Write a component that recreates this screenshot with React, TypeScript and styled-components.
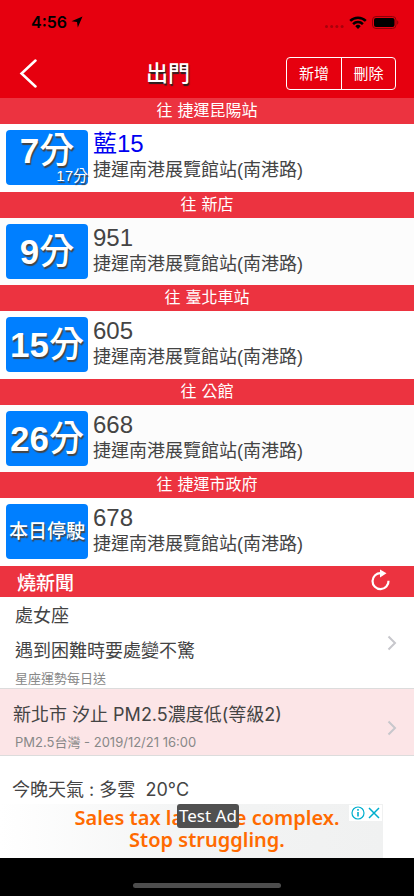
import React from 'react';
import styled, { createGlobalStyle } from 'styled-components';

const cjk = '"Noto Sans CJK TC", sans-serif';

const GlobalStyle = createGlobalStyle`
  *, *::before, *::after { box-sizing: border-box; }
  body {
    margin: 0;
    background: #fff;
    color: #444;
    font-family: "Liberation Sans", ${cjk};
  }
  h1, h2, p { margin: 0; font-weight: 400; }
  button { font: inherit; color: inherit; background: none; border: 0; padding: 0; cursor: pointer; }
  svg { display: block; }
`;

const Page = styled.div`
  min-height: 100vh;
  display: flex;
  flex-direction: column;
`;

const Header = styled.header`
  background: #e6000f;
`;

const StatusBar = styled.div`
  height: 48px;
  padding: 0 15px 4px 31px;
  display: flex;
  align-items: center;
  justify-content: space-between;
  color: #000;
  font: 600 16px/20px Inter, sans-serif;
`;

const StatusGroup = styled.div`
  display: flex;
  align-items: center;
  gap: 4px;
`;

const SignalGroup = styled(StatusGroup)`
  gap: 5px;
`;

const NavBar = styled.div`
  height: 50px;
  padding: 0 18px;
  display: grid;
  grid-template-columns: 1fr auto 1fr;
  align-items: center;
  color: #fff;
`;

const BackButton = styled.button`
  justify-self: start;
`;

const Title = styled.h1`
  font: 500 22px/32px ${cjk};
  text-shadow: 1px 2px 1px #222;
  padding-bottom: 4px;
`;

const Segmented = styled.div`
  justify-self: end;
  display: flex;
  border: 1px solid #fff;
  border-radius: 4px;
`;

const Segment = styled.button`
  width: 54px;
  height: 31px;
  font: 400 15px/20px ${cjk};
  & + & { border-left: 1px solid #fff; }
`;

const TitleSlot = styled.div`
  margin-right: 78px;
`;

const RouteList = styled.main`
  display: grid;
  grid-auto-rows: 1fr;
  min-height: 468px;
`;

const RouteGroup = styled.section`
  display: flex;
  flex-direction: column;
  &:nth-child(even) { background: #fcfcfc; }
`;

const Direction = styled.h2`
  background: #ec3340;
  color: #fff;
  font-size: 16px;
  line-height: 26px;
  font-family: "DejaVu Sans", ${cjk};
  text-align: center;
`;

const RouteRow = styled.div`
  flex: 1;
  padding: 6px 6px 0;
  display: flex;
  gap: 5px;
`;

const TimeBadge = styled.div<{ $small?: boolean }>`
  position: relative;
  flex: none;
  width: 82px;
  height: 55px;
  border-radius: 4px;
  background: #007fff;
  color: #fff;
  display: flex;
  justify-content: center;
  font: ${p => (p.$small ? '500 19px' : '700 35px')}/55px "Liberation Sans", ${cjk};
  text-shadow: 1px 2px 1px #444;
  white-space: nowrap;
`;

const Minutes = styled.span<{ $raised?: boolean }>`
  line-height: ${p => (p.$raised ? 42 : 55)}px;
`;

const Unit = styled.span`
  font-weight: 500;
`;

const NextTime = styled.span`
  position: absolute;
  right: 0;
  bottom: 0;
  font-size: 15px;
  line-height: 18px;
  font-weight: 400;
`;

const RouteText = styled.div`
  min-width: 0;
`;

const RouteName = styled.p<{ $blue?: boolean }>`
  font-size: 24px;
  line-height: 28px;
  color: ${p => (p.$blue ? '#0000f0' : '#444')};
`;

const StopName = styled.p`
  font-size: 18px;
  line-height: 24px;
`;

const NewsHeader = styled.div`
  height: 31px;
  padding: 0 23px 0 17px;
  display: flex;
  align-items: center;
  justify-content: space-between;
  background: #ec3340;
  color: #fff;
`;

const NewsTitle = styled.h2`
  font: 500 19px/31px ${cjk};
`;

const RefreshButton = styled.button`
  align-self: flex-start;
  padding-top: 3px;
`;

const NewsItem = styled.a<{ $tinted?: boolean }>`
  display: flex;
  align-items: center;
  justify-content: space-between;
  padding: ${p => (p.$tinted ? '11px 17px 0 13px' : '1px 17px 0 15px')};
  background: ${p => (p.$tinted ? '#fce5e7' : '#fff')};
  border-bottom: 1px solid #dcdcdc;
  color: inherit;
  text-decoration: none;
  font-family: Inter, ${cjk};
`;

const Headline = styled.p<{ $tall?: boolean }>`
  font-size: 18px;
  line-height: ${p => (p.$tall ? 35 : 30)}px;
`;

const Source = styled.p<{ $indent?: boolean }>`
  font-size: 13px;
  line-height: ${p => (p.$indent ? 25 : 20)}px;
  padding-left: ${p => (p.$indent ? 2 : 0)}px;
  color: #888;
`;

const Weather = styled.p`
  padding: 20px 12px 0;
  font: 400 18px/28px Inter, ${cjk};
  white-space: pre;
`;

const Ad = styled.aside`
  position: relative;
  margin-right: 31px;
  height: 54px;
  background: linear-gradient(90deg, #fff, #f3f4f4 50%, #f0f1f1);
`;

const AdLink = styled.a`
  display: block;
  padding: 3px 0 0 31px;
  color: #ff6a00;
  text-decoration: none;
  text-align: center;
  font: 600 20px/22px "Noto Sans", sans-serif;
`;

const AdLabel = styled.span`
  position: absolute;
  top: 0;
  left: 177px;
  padding: 0 2px;
  border-radius: 3px;
  background: #505050;
  color: #fff;
  font: 400 17px/24px "Noto Sans", sans-serif;
`;

const AdControls = styled.div`
  position: absolute;
  top: 1px;
  right: 1px;
  display: flex;
  gap: 3px;
  padding: 1px 2px;
  background: #fff;
`;

const HomeArea = styled.footer`
  flex: 1;
  min-height: 38px;
  background: #000;
  display: flex;
  justify-content: center;
  align-items: flex-end;
  padding-bottom: 8px;
`;

const HomeIndicator = styled.div`
  width: 148px;
  height: 5px;
  border-radius: 3px;
  background: #4d4d4d;
`;

const routes = [
  { to: '往 捷運昆陽站', count: '7', unit: '分', next: '17分', name: '藍15' },
  { to: '往 新店', count: '9', unit: '分', name: '951' },
  { to: '往 臺北車站', count: '15', unit: '分', name: '605' },
  { to: '往 公館', count: '26', unit: '分', name: '668' },
  { to: '往 捷運市政府', count: '', unit: '本日停駛', name: '678' },
];

const Chevron = () => (
  <svg width="10" height="16" viewBox="0 0 10 16" fill="none" stroke="#c7c7cc" strokeWidth="2">
    <path d="M1.5 1.5 8 8l-6.500 6.500" />
  </svg>
);

export default function App() {
  return (
    <Page>
      <GlobalStyle />
      <Header>
        <StatusBar>
          <StatusGroup>
            <span>4:56</span>
            <svg width="12" height="12" viewBox="0 0 12 12">
              <path d="M11.500.5 6.800 11.500 6 6 .500 5.300Z" />
            </svg>
          </StatusGroup>
          <SignalGroup>
            <svg width="20" height="12" viewBox="0 0 20 12" fill="#a8000b">
              <circle cx="2.500" cy="10.500" r="1.500" />
              <circle cx="7.700" cy="10.500" r="1.500" />
              <circle cx="12.900" cy="10.500" r="1.500" />
              <circle cx="18.100" cy="10.500" r="1.500" />
            </svg>
            <svg width="18" height="13" viewBox="0 0 18 13" fill="none" stroke="#000" strokeWidth="2.500">
              <path d="M1.200 4.900a11 11 0 0 1 15.600 0M4.100 8.100a6.900 6.900 0 0 1 9.800 0" />
              <path d="M9 12.900 6.300 10.200a3.800 3.800 0 0 1 5.400 0Z" fill="#000" stroke="none" />
            </svg>
            <svg width="27" height="13" viewBox="0 0 27 13">
              <rect x=".5" y=".5" width="23.500" height="12" rx="3.500" fill="none" stroke="#8c0009" />
              <rect x="2" y="2" width="20.500" height="9" rx="2" />
              <path d="M25.200 4.300c1.600.7 1.600 3.700 0 4.400Z" fill="#8c0009" />
            </svg>
          </SignalGroup>
        </StatusBar>
        <NavBar>
          <BackButton aria-label="返回">
            <svg width="20" height="30" viewBox="0 0 20 30" fill="none" stroke="#fff" strokeWidth="2.500" strokeLinecap="round">
              <path d="M17.500 2.500 3.500 15.500l14 13" />
            </svg>
          </BackButton>
          <TitleSlot>
            <Title>出門</Title>
          </TitleSlot>
          <Segmented>
            <Segment>新增</Segment>
            <Segment>刪除</Segment>
          </Segmented>
        </NavBar>
      </Header>

      <RouteList>
        {routes.map((r, i) => (
          <RouteGroup key={r.name}>
            <Direction>{r.to}</Direction>
            <RouteRow>
              <TimeBadge $small={!r.count}>
                <Minutes $raised={!!r.next}>{r.count}<Unit>{r.unit}</Unit></Minutes>
                {r.next && <NextTime>{r.next}</NextTime>}
              </TimeBadge>
              <RouteText>
                <RouteName $blue={i === 0}>{r.name}</RouteName>
                <StopName>捷運南港展覽館站(南港路)</StopName>
              </RouteText>
            </RouteRow>
          </RouteGroup>
        ))}
      </RouteList>

      <NewsHeader>
        <NewsTitle>燒新聞</NewsTitle>
        <RefreshButton aria-label="重新整理">
          <svg width="20" height="22" viewBox="0 0 20 22">
            <path d="M17.500 11.700A8 8 0 1 1 10 4.200" fill="none" stroke="#fff" strokeWidth="2.200" />
            <path d="M9 .500 15.500 4.300 9 8.500Z" fill="#fff" />
          </svg>
        </RefreshButton>
      </NewsHeader>
      <NewsItem href="#horoscope">
        <div>
          <Headline $tall>處女座</Headline>
          <Headline $tall>遇到困難時要處變不驚</Headline>
          <Source>星座運勢每日送</Source>
        </div>
        <Chevron />
      </NewsItem>
      <NewsItem href="#air" $tinted>
        <div>
          <Headline>新北市 汐止 PM2.5濃度低(等級2)</Headline>
          <Source $indent>PM2.5台灣 - 2019/12/21 16:00</Source>
        </div>
        <Chevron />
      </NewsItem>
      <Weather>今晚天氣 : 多雲  20°C</Weather>
      <Ad>
        <AdLink href="#ad">Sales tax laws are complex.<br />Stop struggling.</AdLink>
        <AdLabel>Test Ad</AdLabel>
        <AdControls>
          <button aria-label="廣告資訊">
            <svg width="14" height="14" viewBox="0 0 14 14" fill="none" stroke="#00aecd">
              <circle cx="7" cy="7" r="6" strokeWidth="1.200" />
              <path d="M7 6v4.500M7 3v1.700" strokeWidth="1.600" />
            </svg>
          </button>
          <button aria-label="關閉廣告">
            <svg width="12" height="14" viewBox="0 0 12 14" fill="none" stroke="#00aecd" strokeWidth="1.500">
              <path d="m1 2 10 10M11 2 1 12" />
            </svg>
          </button>
        </AdControls>
      </Ad>
      <HomeArea>
        <HomeIndicator />
      </HomeArea>
    </Page>
  );
}
